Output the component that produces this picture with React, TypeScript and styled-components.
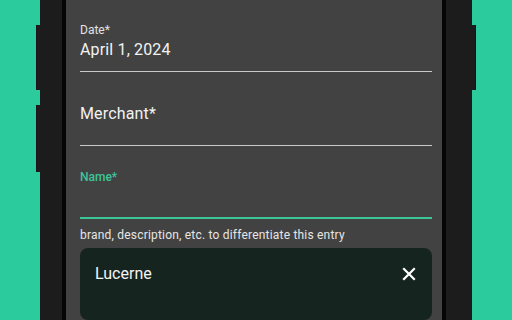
import React from "react";
import styled, { createGlobalStyle } from "styled-components";

const Global = createGlobalStyle`
  html, body { margin: 0; padding: 0; background: #2ccb9d; }
  body { font-family: Roboto, "Noto Sans", sans-serif; overflow: hidden; }
`;

const Stage = styled.div`
  width: 512px;
  height: 320px;
  display: flex;
  justify-content: center;
  background: #2ccb9d;
  overflow: hidden;
`;

const Phone = styled.div`
  position: relative;
  width: 432px;
  height: 320px;
  box-sizing: border-box;
  background: #1c1c1c;
  padding: 0 26px 0 22px;
  display: flex;
`;

const SideButton = styled.div<{ $side: "left" | "right"; $top: number; $height: number }>`
  position: absolute;
  top: ${(p) => p.$top}px;
  height: ${(p) => p.$height}px;
  ${(p) => (p.$side === "left" ? "left: -3px;" : "right: -3px;")}
  width: 3px;
  background: #1c1c1c;
  box-shadow: ${(p) => (p.$side === "left" ? "-1px 0 0 #20141c" : "1px 0 0 #141414")};
`;

const Screen = styled.div`
  flex: 1;
  border-left: 4px solid #050505;
  border-right: 4px solid #050505;
  background: #424242;
  padding: 0 10px 0 14px;
  display: flex;
  flex-direction: column;
`;

const Field = styled.div<{ $pt: number }>`
  display: flex;
  flex-direction: column;
  padding-top: ${(p) => p.$pt}px;
`;

const Label = styled.div<{ $focused?: boolean }>`
  font-size: 12px;
  line-height: 16px;
  font-weight: ${(p) => (p.$focused ? 500 : 400)};
  color: ${(p) => (p.$focused ? "#3dc59a" : "#e2e2e2")};
`;

const Value = styled.div`
  font-size: 16px;
  line-height: 24px;
  color: #f2f2f2;
  letter-spacing: 0.15px;
`;

const Spacer = styled.div<{ $h: number }>`
  height: ${(p) => p.$h}px;
`;

const Underline = styled.div<{ $focused?: boolean }>`
  height: ${(p) => (p.$focused ? 2 : 1)}px;
  background: ${(p) => (p.$focused ? "#3dc59a" : "#c9c9c9")};
`;

const Helper = styled.div`
  margin-top: 8px;
  font-size: 12px;
  line-height: 16px;
  color: #e6e6e6;
  letter-spacing: 0.2px;
`;

const Card = styled.div`
  margin-top: 5px;
  background: #16241f;
  border-radius: 8px;
  height: 120px;
  padding: 14px 15px 0 15px;
  display: flex;
  align-items: flex-start;
  justify-content: space-between;
`;

const CardTitle = styled.div`
  font-size: 16px;
  line-height: 24px;
  color: #f4f4f4;
`;

const CloseButton = styled.div`
  display: flex;
  align-items: center;
  justify-content: center;
  width: 24px;
  height: 24px;
  margin-right: -4px;
  color: #ffffff;
`;

export default function App() {
  return (
    <>
      <Global />
      <Stage>
        <Phone>
          <SideButton $side="left" $top={25} $height={65} />
          <SideButton $side="left" $top={105} $height={67} />
          <SideButton $side="right" $top={25} $height={65} />
          <Screen>
            <Field $pt={22}>
              <Label>Date*</Label>
              <Value>April 1, 2024</Value>
              <Spacer $h={9} />
              <Underline />
            </Field>
            <Field $pt={30}>
              <Value>Merchant*</Value>
              <Spacer $h={19} />
              <Underline />
            </Field>
            <Field $pt={23}>
              <Label $focused>Name*</Label>
              <Spacer $h={32} />
              <Underline $focused />
            </Field>
            <Helper>brand, description, etc. to differentiate this entry</Helper>
            <Card>
              <CardTitle>Lucerne</CardTitle>
              <CloseButton>
                <svg width="24" height="24" viewBox="0 0 24 24">
                  <path d="M7 7 L17 17 M17 7 L7 17" stroke="currentColor" strokeWidth="2.2" strokeLinecap="square" fill="none" />
                </svg>
              </CloseButton>
            </Card>
          </Screen>
        </Phone>
      </Stage>
    </>
  );
}
